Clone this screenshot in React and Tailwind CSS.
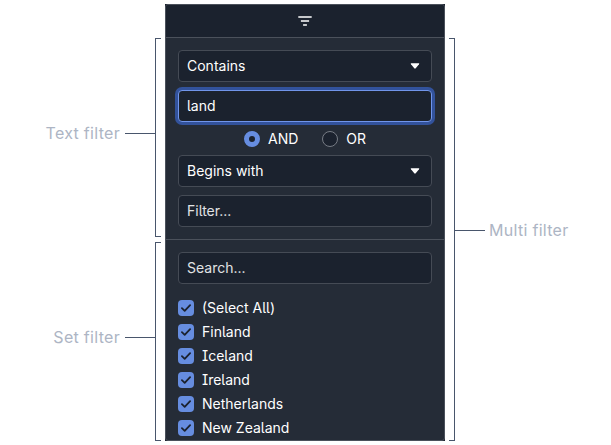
import React from 'react';

const fieldBase =
  'flex h-8 w-full items-center justify-between rounded border px-2 bg-[#1b222e]';

function Select({ label, spacing }) {
  return (
    <div className={`${fieldBase} border-[#454b55]`}>
      <span className={spacing}>{label}</span>
      <svg className="mr-[3px]" width="10" height="6" viewBox="0 0 10 6" fill="#fff">
        <path d="M1.2 0.2H8.8Q9.7 0.4 9 1.3L5.7 5.3Q5 6 4.3 5.3L1 1.3Q0.3 0.4 1.2 0.2Z" />
      </svg>
    </div>
  );
}

function CheckRow({ label, spacing }) {
  return (
    <div className="flex h-6 items-center gap-2">
      <span className="flex size-4 items-center justify-center rounded bg-[#668de0]">
        <svg width="16" height="16" viewBox="0 0 16 16" fill="none" stroke="#1b222e" strokeWidth="1.8">
          <path d="M3.9 8.2L6.7 10.9L12.1 5.2" strokeLinecap="round" strokeLinejoin="round" />
        </svg>
      </span>
      <span className={spacing}>{label}</span>
    </div>
  );
}

function LeftBracket({ label, spacing, height, offset }) {
  return (
    <div className={`flex ${height}`}>
      <div className={`flex w-[155px] items-center self-start h-5 ${offset}`}>
        <span className={`flex-1 pr-[5px] text-right ${spacing}`}>{label}</span>
        <span className="h-px w-[30px] bg-[#49566c]" />
      </div>
      <div className="w-1.5 border-y border-l border-[#49566c]" />
    </div>
  );
}

const items = [
  { label: '(Select All)', spacing: 'tracking-[0px]' },
  { label: 'Finland', spacing: 'tracking-[0px]' },
  { label: 'Iceland', spacing: 'tracking-[0px]' },
  { label: 'Ireland', spacing: 'tracking-[0px]' },
  { label: 'Netherlands', spacing: 'tracking-[0px]' },
  { label: 'New Zealand', spacing: 'tracking-[0px]' },
];

export default function App() {
  return (
    <div className="flex h-[445px] w-[611px] overflow-hidden bg-white pt-1 font-['Inter',sans-serif] text-base leading-5 text-[#adb5c4]">
      <div className="flex w-[165px] flex-col gap-[5px] pt-[34px]">
        <LeftBracket label="Text filter" spacing="tracking-[0.3px]" height="h-[199px]" offset="mt-[85px]" />
        <LeftBracket label="Set filter" spacing="tracking-[0.3px]" height="h-[199px]" offset="mt-[85px]" />
      </div>

      <div className="h-[437px] w-[280px] bg-[#1b222e]">
        <div className="flex h-full flex-col overflow-hidden rounded-[3px] border border-[#4b515b] bg-[#252c37] text-sm leading-5 text-white [font-feature-settings:'cv05','cv08']">
          <div className="flex h-[33px] shrink-0 items-center justify-center border-b border-[#4b515b] bg-[#1b222e]">
            <svg width="14" height="10" viewBox="0 0 14 10" stroke="#fff" strokeWidth="1.5">
              <path d="M0.3 0.9H13.7M2.9 5H11.1M5.1 9H8.9" />
            </svg>
          </div>
          <div className="flex flex-col border-b border-[#4b515b] p-3">
            <Select label="Contains" spacing="tracking-[0px]" />
            <div className={`${fieldBase} mt-2 border-[#7195ea] shadow-[0_0_0_3px_#32529b]`}>land</div>
            <div className="flex h-[33px] items-center justify-center gap-6">
              <div className="flex items-center gap-2">
                <span className="size-4 rounded-full border-[5px] border-[#668de0] bg-[#1b222e]" />
                <span>AND</span>
              </div>
              <div className="flex items-center gap-2">
                <span className="size-4 rounded-full border border-[#777c85] bg-[#1b222e]" />
                <span>OR</span>
              </div>
            </div>
            <Select label="Begins with" spacing="tracking-[0px]" />
            <div className={`${fieldBase} mt-2 border-[#454b55] text-[#e1e3e5]`}>Filter...</div>
          </div>
          <div className="px-3 pt-3">
            <div className={`${fieldBase} border-[#454b55] text-[#e1e3e5]`}>Search...</div>
            <div className="mt-3">
              {items.map((item) => (
                <CheckRow key={item.label} {...item} />
              ))}
            </div>
          </div>
        </div>
      </div>

      <div className="ml-1 flex pt-[34px]">
        <div className="h-[403px] w-1.5 border-y border-r border-[#49566c]" />
        <div className="mt-[182px] flex h-5 items-center">
          <span className="h-px w-[30px] bg-[#49566c]" />
          <span className="pl-1 tracking-[0.3px]">Multi filter</span>
        </div>
      </div>
    </div>
  );
}
